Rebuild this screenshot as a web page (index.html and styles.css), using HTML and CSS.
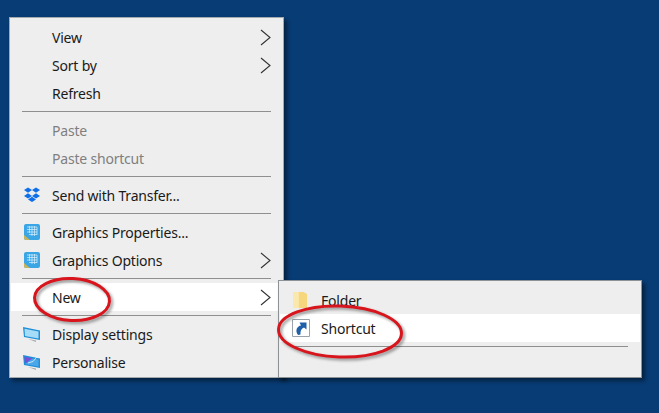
FILE: index.html
```html
<!DOCTYPE html>
<html>
<head>
    <meta charset="UTF-8">
    <title>Desktop context menu</title>
    <link rel="stylesheet" href="styles.css">
</head>
<body>
    <div class="menu">
        <div class="item"><span class="icon"></span><span class="label">View</span>
            <svg class="arrow" viewBox="0 0 11 17"><path d="M1 1l9 7.5-9 7.5"/></svg></div>
        <div class="item"><span class="icon"></span><span class="label">Sort by</span>
            <svg class="arrow" viewBox="0 0 11 17"><path d="M1 1l9 7.5-9 7.5"/></svg></div>
        <div class="item"><span class="icon"></span><span class="label">Refresh</span></div>
        <div class="sep"></div>
        <div class="item disabled"><span class="icon"></span><span class="label">Paste</span></div>
        <div class="item disabled"><span class="icon"></span><span class="label">Paste shortcut</span></div>
        <div class="sep"></div>
        <div class="item">
            <span class="icon">
                <svg viewBox="0 0 16 15"><path fill="#0f6fe8" d="M4 0l4 2.600L4 5.200 0 2.600zM12 0l4 2.600-4 2.600-4-2.600zM4 5.800l4 2.600-4 2.600-4-2.600zM12 5.800l4 2.600-4 2.600-4-2.600zM8 9.300l4 2.600L8 14.600l-4-2.700z"/></svg>
            </span>
            <span class="label">Send with Transfer...</span>
        </div>
        <div class="sep"></div>
        <div class="item">
            <span class="icon">
                <svg viewBox="0 0 16 16"><use href="#graphics"/></svg>
            </span>
            <span class="label">Graphics Properties...</span>
        </div>
        <div class="item">
            <span class="icon">
                <svg viewBox="0 0 16 16"><use href="#graphics"/></svg>
            </span>
            <span class="label">Graphics Options</span>
            <svg class="arrow" viewBox="0 0 11 17"><path d="M1 1l9 7.5-9 7.5"/></svg>
        </div>
        <div class="sep"></div>
        <div class="item active"><span class="icon"></span><span class="label">New</span>
            <svg class="arrow" viewBox="0 0 11 17"><path d="M1 1l9 7.5-9 7.5"/></svg></div>
        <div class="sep"></div>
        <div class="item">
            <span class="icon">
                <svg class="icon-monitor" viewBox="0 0 17 17">
                    <path fill="#1f8fd8" d="M0 1l17 3.500V14L1 11z"/>
                    <path fill="#a5dcf7" d="M1.500 2.800L15.500 5.600v7L2 10z"/>
                    <path fill="#a8a8a8" d="M5 13l8 1.600V16z"/>
                </svg>
            </span>
            <span class="label">Display settings</span>
        </div>
        <div class="item">
            <span class="icon">
                <svg class="icon-monitor" viewBox="0 0 17 17">
                    <path fill="#1f8fd8" d="M0 1l17 3.500V14L1 11z"/>
                    <path fill="#7a4fd8" d="M1.500 2.800l8 1.600-7.500 5.600z"/>
                    <path fill="#4aa8e8" d="M9.500 4.400l6 1.200v7L2 10z"/>
                    <path fill="none" stroke="#e8f4fb" stroke-width=".8" d="M5 9l5-1.500L15.500 1"/>
                    <path fill="#a8a8a8" d="M5 13l8 1.600V16z"/>
                </svg>
            </span>
            <span class="label">Personalise</span>
        </div>
    </div>

    <div class="menu submenu">
        <div class="item">
            <span class="icon icon-left">
                <svg viewBox="0 0 12 16" preserveAspectRatio="none">
                    <path fill="#f6d77e" d="M0 0h9l3 2v14H0z"/>
                    <path fill="#fbe8ae" d="M0 0h5v16H0z"/>
                </svg>
            </span>
            <span class="label">Folder</span>
        </div>
        <div class="item active">
            <span class="icon">
                <svg class="icon-shortcut" viewBox="0 0 18 18">
                    <path fill="#fff" stroke="#9aa3ad" d="M.5.500h17v17H.5z"/>
                    <path fill="#1f5fa8" d="M6 16C2.500 11 5.500 7 9 6.500L7.500 3.500H14.500V10.500L12 8.500C9.500 9.500 8 12 8.500 15.500z"/>
                </svg>
            </span>
            <span class="label">Shortcut</span>
        </div>
        <div class="sep"></div>
    </div>

    <svg class="marks" viewBox="0 0 659 413">
        <ellipse cx="72" cy="299.500" rx="37.500" ry="21" transform="rotate(3 72 299.500)"/>
        <ellipse cx="340" cy="331.500" rx="61.500" ry="25.500" transform="rotate(2 340 331.500)"/>
    </svg>

    <svg class="defs" width="0" height="0">
        <symbol id="graphics" viewBox="0 0 16 16">
            <rect width="16" height="16" rx="2" fill="#3ba6e6"/>
            <path fill="#c9b458" d="M0 11l6 5H2a2 2 0 0 1-2-2z"/>
            <path fill="none" stroke="#d8f1fd" stroke-width=".7" d="M3 3h10M3 5.500h10M3 8h10M5 10.500h8M5.500 2v7M8 2v10M10.500 2v10M13 3v8"/>
        </symbol>
    </svg>
</body>
</html>
```

FILE: styles.css
```css
* {
    box-sizing: border-box;
}

html, body {
    margin: 0;
    padding: 0;
    width: 100%;
    height: 100%;
    overflow: hidden;
}

body {
    position: relative;
    background: #083c75;
    padding: 17px 0 0 9px;
    font-family: "Noto Sans", "Open Sans", sans-serif;
    font-size: 14px;
    letter-spacing: -0.2px;
    color: #1a1a1a;
}

.menu {
    width: 275px;
    height: 361px;
    padding: 5px 1px 0 1px;
    background: #eeeeee;
    border: 1px solid #a4a9ad;
    box-shadow: 3px 3px 4px rgba(0, 0, 0, 0.45);
}

.submenu {
    position: absolute;
    left: 278px;
    top: 280px;
    width: 364px;
    height: 98px;
    padding-top: 5px;
    border-color: #8d9296;
}

.item {
    display: flex;
    align-items: center;
    height: 28px;
    padding-right: 11px;
}

.item.active {
    background: #ffffff;
}

.item.disabled {
    color: #7f7f7f;
}

.icon {
    display: flex;
    align-items: center;
    justify-content: center;
    flex: none;
    width: 41px;
    height: 100%;
}

.icon svg {
    width: 16px;
    height: 16px;
}

.icon .icon-monitor {
    width: 17px;
    height: 17px;
}

.icon .icon-shortcut {
    width: 18px;
    height: 18px;
}

.icon-left {
    justify-content: flex-start;
    padding-left: 13px;
}

.icon-left svg {
    width: 14px;
}

.label {
    flex: 1;
    white-space: nowrap;
}

.arrow {
    flex: none;
    width: 11px;
    height: 17px;
}

.arrow path {
    fill: none;
    stroke: #333;
    stroke-width: 1.1;
}

.sep {
    height: 1px;
    margin: 4px 11px;
    background: #8f8f8f;
}

.submenu .sep {
    margin-left: 13px;
    margin-right: 12px;
}

.marks {
    position: absolute;
    left: 0;
    top: 0;
    width: 659px;
    height: 413px;
    pointer-events: none;
    filter: drop-shadow(2px 2px 1.5px rgba(0, 0, 0, 0.4));
}

.marks ellipse {
    fill: none;
    stroke: #d8141c;
    stroke-width: 3;
}

.defs {
    position: absolute;
}
```
